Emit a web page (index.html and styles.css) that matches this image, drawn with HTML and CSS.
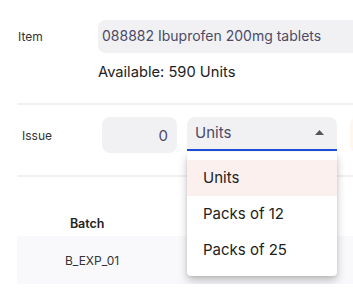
FILE: index.html
```html
<!DOCTYPE html>
<html lang="en">
<head>
    <meta charset="UTF-8">
    <meta name="viewport" content="width=device-width, initial-scale=1.0">
    <title>Issue stock</title>
    <link rel="stylesheet" href="styles.css">
</head>
<body>
    <div class="stran">
        <div class="vrsta">
            <span class="oznaka">Item</span>
            <div class="polje polje-artikel">088882 Ibuprofen 200mg tablets</div>
        </div>
        <div class="na-voljo">Available: 590 Units</div>

        <hr class="crta">

        <div class="vrsta vrsta-izdaja">
            <span class="oznaka">Issue</span>
            <div class="polje polje-kolicina">0</div>
            <div class="izbira">
                <span>Units</span>
                <svg class="puscica" width="9" height="5" viewBox="0 0 9 5"><path d="M0 5 L4.5 0 L9 5 Z" fill="#555"/></svg>
                <div class="meni">
                    <div class="meni-vnos izbran">Units</div>
                    <div class="meni-vnos">Packs of 12</div>
                    <div class="meni-vnos">Packs of 25</div>
                </div>
            </div>
            <div class="polje polje-naprej"></div>
        </div>

        <hr class="crta">

        <div class="tabela">
            <div class="glava">
                <span class="celica krepko">Batch</span>
                <span class="celica krepko">Location</span>
            </div>
            <div class="vrstica">
                <span class="celica">B_EXP_01</span>
                <span class="celica"></span>
            </div>
        </div>
    </div>
</body>
</html>
```

FILE: styles.css
```css
body {
    margin: 0;
    overflow: hidden;
    background-color: white;
    font-family: Inter, "Noto Sans", sans-serif;
    color: #2a2a2e;
}

.stran {
    width: 440px;
    padding: 20px 0 0 17px;
}

.vrsta {
    display: flex;
    align-items: center;
}

.oznaka {
    width: 80px;
    padding-left: 1px;
    font-size: 12px;
    color: #333;
}

.polje {
    box-sizing: border-box;
    height: 33px;
    background-color: #f1f1f4;
    border-radius: 8px;
    font-size: 15px;
    line-height: 33px;
    color: #4b4b66;
}

.polje-artikel {
    flex: 1;
    padding-left: 4px;
    font-size: 14px;
    line-height: 31px;
}

.na-voljo {
    margin: 9px 0 0 81px;
    font-size: 14.7px;
    line-height: 20px;
    color: #222;
}

.crta {
    margin: 21px 0 0 0;
    border: none;
    border-top: 2px solid #f1f1f3;
}

.vrsta-izdaja {
    margin-top: 12px;
    padding-left: 5px;
    align-items: flex-start;
}

.vrsta-izdaja .oznaka {
    line-height: 37px;
    padding-left: 0;
}

.polje-kolicina {
    width: 75px;
    height: 36px;
    line-height: 37px;
    text-align: right;
    padding-right: 9px;
}

.izbira {
    position: relative;
    box-sizing: border-box;
    width: 150px;
    height: 34px;
    margin-left: 10px;
    padding: 0 13px 0 8px;
    display: flex;
    align-items: center;
    justify-content: space-between;
    background-color: #f1f1f4;
    border-radius: 8px 8px 0 0;
    border-bottom: 2px solid #1f4fd8;
    font-size: 15px;
    color: #4b4b66;
}

.izbira span {
    margin-top: -2px;
}

.puscica {
    margin-top: -2px;
}

.polje-naprej {
    width: 60px;
    height: 36px;
    margin-left: 13px;
    background-color: #fdf7ef;
}

.meni {
    position: absolute;
    left: 0;
    top: 35px;
    width: 150px;
    padding: 8px 0;
    background-color: white;
    border-radius: 4px;
    box-shadow: 0px 5px 10px rgba(0, 0, 0, 0.22), 0px 1px 3px rgba(0, 0, 0, 0.1);
    z-index: 2;
}

.meni-vnos {
    height: 36px;
    line-height: 36px;
    padding-left: 16px;
    font-size: 15px;
    color: #222;
}

.izbran {
    background-color: #fbf0ee;
}

.tabela {
    margin-top: 35px;
}

.glava,
.vrstica {
    display: flex;
}

.celica {
    width: 150px;
    text-align: center;
    font-size: 12px;
}

.glava .celica {
    font-size: 12.5px;
    line-height: 23px;
    margin-bottom: 1px;
}

.krepko {
    font-weight: 600;
    color: #222;
}

.glava .celica + .celica {
    width: 320px;
}

.vrstica {
    height: 48px;
    align-items: center;
    background-color: #f9f9fb;
    color: #333;
}
```
